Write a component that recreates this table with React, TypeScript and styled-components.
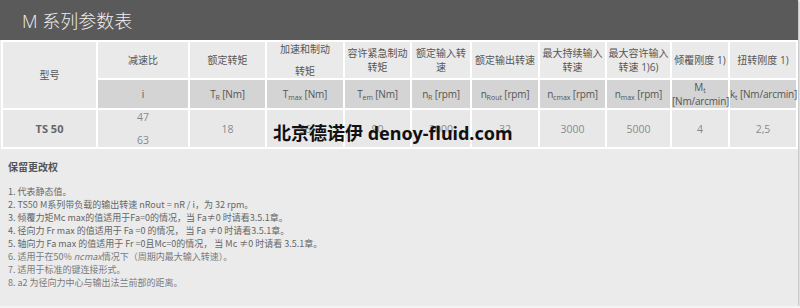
import React from "react";
import styled, { createGlobalStyle } from "styled-components";

const Global = createGlobalStyle`
  body {
    margin: 0;
    background: #f4f4f4;
    font-family: "Open Sans", "Noto Sans CJK SC", sans-serif;
  }
`;

const Panel = styled.div`
  position: relative;
  width: 798px;
  height: 306px;
  background: #ebebeb;
  box-shadow: 1px 1px 2px rgba(0, 0, 0, 0.25);
`;

const TitleBar = styled.div`
  height: 40px;
  display: flex;
  align-items: center;
  padding-left: 22px;
  background: #5a5a5a;
  color: #f0f0f0;
  font-size: 18px;
  font-weight: 300;
`;

const SpecTable = styled.table`
  margin-left: 1px;
  width: 797px;
  table-layout: fixed;
  border-collapse: separate;
  border-spacing: 2px;
  background: #fff;
  font-size: 10px;
  color: #555;
`;

const HeadCell = styled.th`
  height: 36px;
  padding: 0;
  background: #eaeaea;
  font-weight: 400;
  font-size: 10px;
  line-height: 14px;
  text-align: center;
  vertical-align: middle;
`;

const UnitCell = styled.th`
  height: 26px;
  padding: 0;
  background: #d4d4d4;
  font-weight: 400;
  font-size: 10px;
  line-height: 14px;
  letter-spacing: -0.2px;
  text-align: center;
  white-space: nowrap;
`;

const DataCell = styled.td<{ $bold?: boolean }>`
  height: 36px;
  padding: 0;
  background: #e8e8e8;
  text-align: center;
  font-size: ${p => (p.$bold ? "11px" : "10.5px")};
  font-weight: ${p => (p.$bold ? 700 : 400)};
  color: ${p => (p.$bold ? "#666" : "#8a8a8a")};
`;

const Spaced = styled.div<{ $gap: number }>`
  display: flex;
  flex-direction: column;
  align-items: center;
  gap: ${p => p.$gap}px;
  line-height: 14px;
`;

const Sub = styled.sub`
  font-size: 7px;
  vertical-align: -2px;
  line-height: 0;
  letter-spacing: 0;
`;

const Notes = styled.div`
  padding: 11px 8px 0;
  font-family: "Noto Sans CJK SC", sans-serif;
  font-size: 9px;
  color: #666;
`;

const NoteTitle = styled.div`
  font-size: 10px;
  font-weight: 700;
  color: #555;
  line-height: 14px;
  margin-bottom: 11px;
`;

const NoteLine = styled.div<{ $light?: boolean }>`
  line-height: 13px;
  color: ${p => (p.$light ? "#7a7a7a" : "#666")};
`;

const Watermark = styled.div`
  position: absolute;
  left: 273px;
  top: 121px;
  font-family: "Noto Sans", "Noto Sans CJK SC", sans-serif;
  font-size: 18px;
  font-weight: 700;
  color: #111;
  line-height: 24px;
  white-space: nowrap;
`;

const widths = [93, 90, 75, 76, 65, 58, 66, 65, 63, 56, 66];

const heads = [
  "减速比",
  "额定转矩",
  null,
  "容许紧急制动转矩",
  "额定输入转速",
  "额定输出转速",
  "最大持续输入转速",
  "最大容许输入转速 1)6)",
  "倾覆刚度 1)",
  "扭转刚度 1)",
];

const values = ["18", "36", "90", "2000", "32", "3000", "5000", "4", "2,5"];

export default function App() {
  return (
    <Panel>
      <Global />
      <TitleBar>M 系列参数表</TitleBar>
      <SpecTable>
        <colgroup>
          {widths.map((w, i) => (
            <col key={i} style={{ width: w }} />
          ))}
        </colgroup>
        <thead>
          <tr>
            <HeadCell rowSpan={2}>型号</HeadCell>
            {heads.map((h, i) =>
              h === null ? (
                <HeadCell key={i}>
                  <Spaced $gap={8}>
                    <span>加速和制动</span>
                    <span>转矩</span>
                  </Spaced>
                </HeadCell>
              ) : (
                <HeadCell key={i}>{h}</HeadCell>
              )
            )}
          </tr>
          <tr>
            <UnitCell>i</UnitCell>
            <UnitCell>T<Sub>R</Sub> [Nm]</UnitCell>
            <UnitCell>T<Sub>max</Sub> [Nm]</UnitCell>
            <UnitCell>T<Sub>em</Sub> [Nm]</UnitCell>
            <UnitCell>n<Sub>R</Sub> [rpm]</UnitCell>
            <UnitCell>n<Sub>Rout</Sub> [rpm]</UnitCell>
            <UnitCell>n<Sub>cmax</Sub> [rpm]</UnitCell>
            <UnitCell>n<Sub>max</Sub> [rpm]</UnitCell>
            <UnitCell>
              M<Sub>t</Sub>
              <br />
              [Nm/arcmin]
            </UnitCell>
            <UnitCell>k<Sub>t</Sub> [Nm/arcmin]</UnitCell>
          </tr>
        </thead>
        <tbody>
          <tr>
            <DataCell $bold>TS 50</DataCell>
            <DataCell>
              <Spaced $gap={9}>
                <span>47</span>
                <span>63</span>
              </Spaced>
            </DataCell>
            {values.map((v, i) => (
              <DataCell key={i}>{v}</DataCell>
            ))}
          </tr>
        </tbody>
      </SpecTable>
      <Notes>
        <NoteTitle>保留更改权</NoteTitle>
        <NoteLine>1. 代表静态值。</NoteLine>
        <NoteLine>2. TS50 M系列带负载的输出转速 nRout = nR / i，为 32 rpm。</NoteLine>
        <NoteLine>3. 倾覆力矩Mc max的值适用于Fa=0的情况，当 Fa≠0 时请看3.5.1章。</NoteLine>
        <NoteLine>4. 径向力 Fr max 的值适用于 Fa =0 的情况， 当 Fa ≠0 时请看3.5.1章。</NoteLine>
        <NoteLine>5. 轴向力 Fa max 的值适用于 Fr =0且Mc=0的情况， 当 Mc ≠0 时请看 3.5.1章。</NoteLine>
        <NoteLine $light>
          6. 适用于在50% <em>ncmax</em>情况下（周期内最大输入转速）。
        </NoteLine>
        <NoteLine $light>7. 适用于标准的键连接形式。</NoteLine>
        <NoteLine $light>8. a2 为径向力中心与输出法兰前部的距离。</NoteLine>
      </Notes>
      <Watermark>北京德诺伊 denoy-fluid.com</Watermark>
    </Panel>
  );
}
